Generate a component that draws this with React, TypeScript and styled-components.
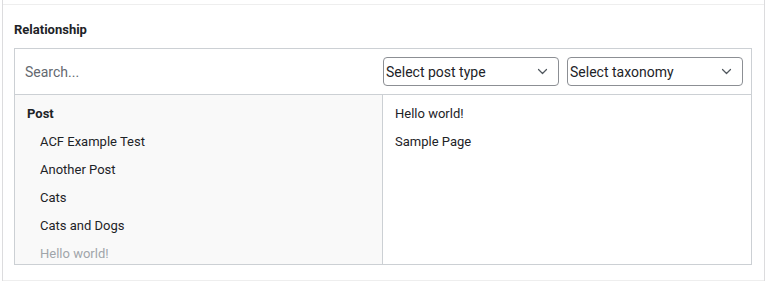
import React from 'react';
import styled, { createGlobalStyle } from 'styled-components';

const GlobalStyle = createGlobalStyle`
  html, body {
    margin: 0;
    padding: 0;
    background: #ffffff;
    font-family: Roboto, "Liberation Sans", sans-serif;
    color: #1d2327;
  }
`;

const Panel = styled.div`
  margin-left: 2px;
  width: 761px;
  padding-top: 4px;
  border-left: 1px solid #dcdcde;
  border-right: 1px solid #dcdcde;
`;

const Field = styled.div`
  border-top: 1px solid #eeeeee;
  border-bottom: 1px solid #eeeeee;
  padding: 15px 12px 15px 11px;
`;

const Label = styled.label`
  display: block;
  font-size: 13px;
  font-weight: 700;
  line-height: 19px;
  margin-bottom: 9px;
  color: #1d2327;
`;

const Box = styled.div`
  border: 1px solid #ccd0d4;
  background: #ffffff;
`;

const Filters = styled.div`
  display: flex;
  align-items: center;
  gap: 8px;
  padding: 8px 8px 8px 0;
  border-bottom: 1px solid #ccd0d4;
`;

const SearchInput = styled.input`
  flex: 1;
  height: 29px;
  border: none;
  outline: none;
  padding: 0 10px;
  font-family: inherit;
  font-size: 14px;
  color: #1d2327;
  background: transparent;

  &::placeholder {
    color: #646970;
  }
`;

const SelectBox = styled.div<{ $width: number }>`
  width: ${(p) => p.$width}px;
  height: 29px;
  box-sizing: border-box;
  display: flex;
  align-items: center;
  justify-content: space-between;
  border: 1px solid #8c8f94;
  border-radius: 4px;
  padding: 0 10px 0 2px;
  font-size: 14px;
  color: #1d2327;
`;

const Columns = styled.div`
  display: grid;
  grid-template-columns: 368px 1fr;
  height: 169px;
`;

const List = styled.ul<{ $muted?: boolean }>`
  list-style: none;
  margin: 0;
  padding: 5px 0 4px;
  overflow: hidden;
  background: ${(p) => (p.$muted ? '#f9f9f9' : '#ffffff')};
  border-right: ${(p) => (p.$muted ? '1px solid #ccd0d4' : 'none')};
`;

const Item = styled.li<{ $level?: number; $disabled?: boolean; $group?: boolean }>`
  padding: 4px 7px 4px ${(p) => 12 + (p.$level || 0) * 13}px;
  line-height: 20px;
  font-size: 13px;
  font-weight: ${(p) => (p.$group ? 700 : 400)};
  color: ${(p) => (p.$disabled ? '#a0a5aa' : '#1d2327')};
`;

const Chevron = () => (
  <svg width="11" height="7" viewBox="0 0 11 7" fill="none">
    <path d="M1.5 1.5l4 4 4-4" stroke="#50575e" strokeWidth="1.2" strokeLinecap="round" strokeLinejoin="round" />
  </svg>
);

const choices = ['ACF Example Test', 'Another Post', 'Cats', 'Cats and Dogs', 'Hello world!'];
const selected = ['Hello world!', 'Sample Page'];

export default function App() {
  return (
    <>
      <GlobalStyle />
      <Panel>
        <Field>
          <Label>Relationship</Label>
          <Box>
            <Filters>
              <SearchInput placeholder="Search..." />
              <SelectBox $width={176}>
                Select post type
                <Chevron />
              </SelectBox>
              <SelectBox $width={176}>
                Select taxonomy
                <Chevron />
              </SelectBox>
            </Filters>
            <Columns>
              <List $muted>
                <Item $group>Post</Item>
                {choices.map((c) => (
                  <Item key={c} $level={1} $disabled={selected.includes(c)}>
                    {c}
                  </Item>
                ))}
              </List>
              <List>
                {selected.map((s) => (
                  <Item key={s}>{s}</Item>
                ))}
              </List>
            </Columns>
          </Box>
        </Field>
      </Panel>
    </>
  );
}
